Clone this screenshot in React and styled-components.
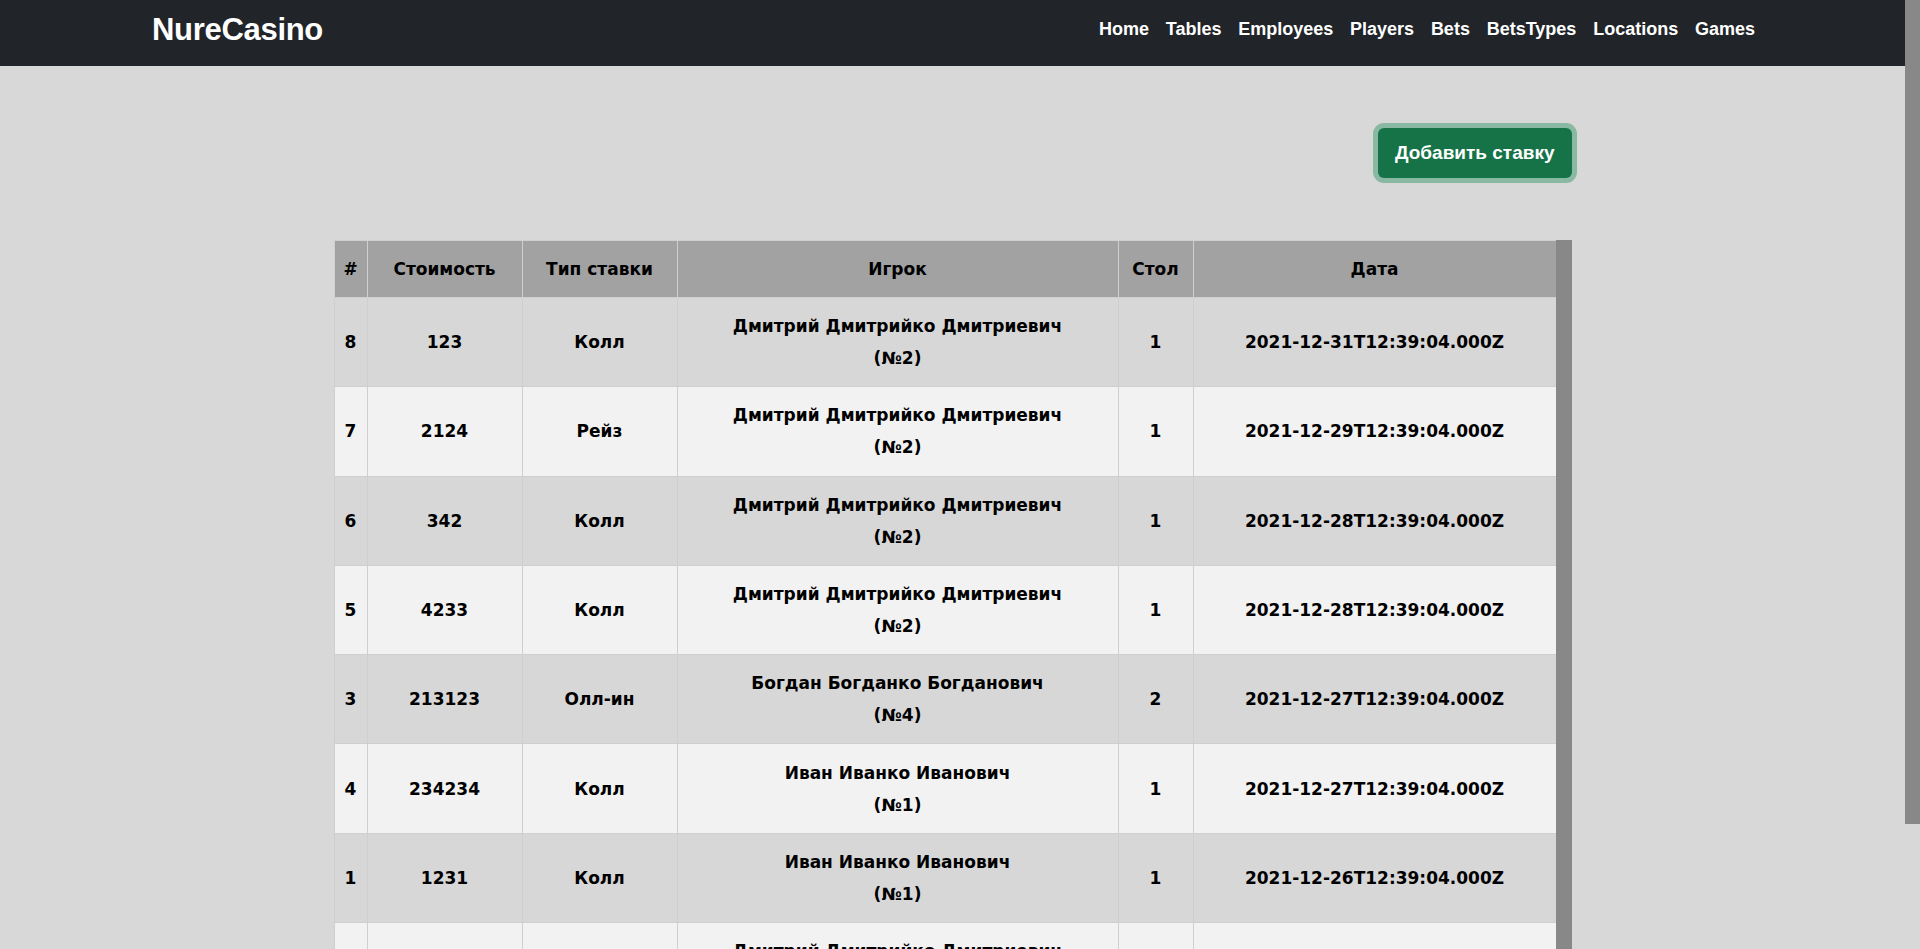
import React from 'react';
import styled, { createGlobalStyle } from 'styled-components';

const GlobalStyle = createGlobalStyle`
  html, body {
    margin: 0;
    padding: 0;
    background: #d8d8d8;
    font-family: "Liberation Sans", Arial, sans-serif;
  }
`;

// the screenshot browser hides native scrollbars, so the grey thumbs are drawn as rails
const Shell = styled.div`
  display: flex;
  height: 100vh;
  overflow: hidden;
`;

const Page = styled.div`
  flex: 1;
  min-width: 0;
  overflow: hidden;
`;

const Rail = styled.div`
  flex: 0 0 ${p => p.size}px;
  display: flex;
  flex-direction: column;
`;

const Thumb = styled.div`
  height: ${p => p.length}px;
  background: #888;
  flex-shrink: 0;
`;

const Navbar = styled.nav`
  height: 66px;
  box-sizing: border-box;
  padding: 0 142px 7px 152px;
  background: #212529;
  display: flex;
  align-items: center;
  justify-content: space-between;
`;

const Brand = styled.a`
  color: #fff;
  font-family: "Liberation Sans", Arial, sans-serif;
  font-weight: 700;
  font-size: 31px;
  letter-spacing: -0.3px;
  text-decoration: none;
`;

const Links = styled.div`
  display: flex;
  align-items: center;
`;

const NavLink = styled.a`
  color: #fff;
  font-family: "Liberation Sans", Arial, sans-serif;
  font-weight: 700;
  font-size: 18px;
  padding: 0 8.4px;
  text-decoration: none;

  &:last-child {
    padding-right: 8px;
  }
`;

const Main = styled.main`
  width: 1238px;
  margin: 0 auto 33px;
`;

const Toolbar = styled.div`
  display: flex;
  justify-content: flex-end;
  padding: 62px 0;
`;

const AddButton = styled.button`
  height: 50px;
  padding: 0 17px;
  border: none;
  border-radius: 6px;
  background: #157347;
  color: #fff;
  font-family: "Liberation Sans", Arial, sans-serif;
  font-weight: 700;
  font-size: 19px;
  box-shadow: 0 0 0 5px rgba(60, 153, 110, 0.5);
  cursor: pointer;
`;

const TableWrap = styled.div`
  display: flex;
  height: 820px;
`;

const ScrollArea = styled.div`
  width: 1222px;
  overflow: hidden;
`;

const Table = styled.table`
  width: 1222px;
  table-layout: fixed;
  border-collapse: collapse;
  font-family: "DejaVu Sans", Verdana, sans-serif;
  font-weight: 700;
  font-size: 17px;
  line-height: 32px;
  color: #000;
`;

const Th = styled.th`
  box-sizing: border-box;
  width: ${p => p.w}px;
  padding: 12px 4px;
  background: #a2a2a2;
  border: 1px solid #cfcfcf;
  text-align: center;
  font-weight: 700;
`;

const Row = styled.tr`
  background: ${p => (p.striped ? '#d7d7d7' : '#f2f2f2')};
`;

const Td = styled.td`
  padding: 12px 4px;
  border: 1px solid #cfcfcf;
  text-align: center;
  height: 64.3px;
`;

const columns = [
  { title: '#', w: 33 },
  { title: 'Стоимость', w: 155 },
  { title: 'Тип ставки', w: 155 },
  { title: 'Игрок', w: 441 },
  { title: 'Стол', w: 75 },
  { title: 'Дата', w: 363 }
];

const bets = [
  { id: 8, cost: 123, type: 'Колл', player: 'Дмитрий Дмитрийко Дмитриевич', pid: 2, table: 1, date: '2021-12-31T12:39:04.000Z' },
  { id: 7, cost: 2124, type: 'Рейз', player: 'Дмитрий Дмитрийко Дмитриевич', pid: 2, table: 1, date: '2021-12-29T12:39:04.000Z' },
  { id: 6, cost: 342, type: 'Колл', player: 'Дмитрий Дмитрийко Дмитриевич', pid: 2, table: 1, date: '2021-12-28T12:39:04.000Z' },
  { id: 5, cost: 4233, type: 'Колл', player: 'Дмитрий Дмитрийко Дмитриевич', pid: 2, table: 1, date: '2021-12-28T12:39:04.000Z' },
  { id: 3, cost: 213123, type: 'Олл-ин', player: 'Богдан Богданко Богданович', pid: 4, table: 2, date: '2021-12-27T12:39:04.000Z' },
  { id: 4, cost: 234234, type: 'Колл', player: 'Иван Иванко Иванович', pid: 1, table: 1, date: '2021-12-27T12:39:04.000Z' },
  { id: 1, cost: 1231, type: 'Колл', player: 'Иван Иванко Иванович', pid: 1, table: 1, date: '2021-12-26T12:39:04.000Z' },
  { id: 2, cost: 5432, type: 'Рейз', player: 'Дмитрий Дмитрийко Дмитриевич', pid: 2, table: 1, date: '2021-12-25T12:39:04.000Z' },
  { id: 9, cost: 777, type: 'Колл', player: 'Иван Иванко Иванович', pid: 1, table: 2, date: '2021-12-24T12:39:04.000Z' }
];

const navItems = ['Home', 'Tables', 'Employees', 'Players', 'Bets', 'BetsTypes', 'Locations', 'Games'];

export default function App() {
  return (
    <>
      <GlobalStyle />
      <Shell>
        <Page>
          <Navbar>
            <Brand href="#">NureCasino</Brand>
            <Links>
              {navItems.map(item => <NavLink key={item} href="#">{item}</NavLink>)}
            </Links>
          </Navbar>
          <Main>
            <Toolbar>
              <AddButton>Добавить ставку</AddButton>
            </Toolbar>
            <TableWrap>
              <ScrollArea>
                <Table>
                  <thead>
                    <tr>
                      {columns.map(col => <Th key={col.title} w={col.w}>{col.title}</Th>)}
                    </tr>
                  </thead>
                  <tbody>
                    {bets.map((bet, i) => (
                      <Row key={bet.id} striped={i % 2 === 0}>
                        <Td>{bet.id}</Td>
                        <Td>{bet.cost}</Td>
                        <Td>{bet.type}</Td>
                        <Td>{bet.player}<br />(№{bet.pid})</Td>
                        <Td>{bet.table}</Td>
                        <Td>{bet.date}</Td>
                      </Row>
                    ))}
                  </tbody>
                </Table>
              </ScrollArea>
              <Rail size={16}>
                <Thumb length={780} />
              </Rail>
            </TableWrap>
          </Main>
        </Page>
        <Rail size={15}>
          <Thumb length={824} />
        </Rail>
      </Shell>
    </>
  );
}
